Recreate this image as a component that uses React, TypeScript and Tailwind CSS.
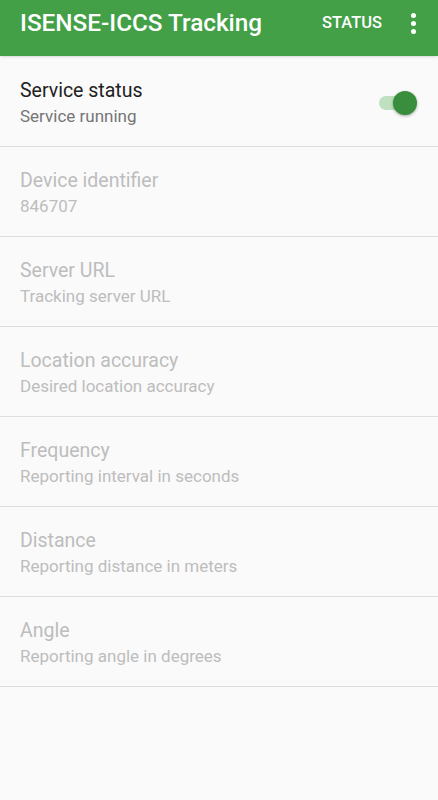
import React from 'react';

const rows = [
  { title: 'Device identifier', summary: '846707' },
  { title: 'Server URL', summary: 'Tracking server URL' },
  { title: 'Location accuracy', summary: 'Desired location accuracy' },
  { title: 'Frequency', summary: 'Reporting interval in seconds' },
  { title: 'Distance', summary: 'Reporting distance in meters' },
  { title: 'Angle', summary: 'Reporting angle in degrees' },
];

const App: React.FC = () => {
  return (
    <div className="min-h-[800px] w-[438px] bg-[#fafafa] font-['Roboto',sans-serif]">
      <header className="flex h-14 items-center bg-[#43a047] pb-[10px] pl-5 pr-[22px] text-white shadow-sm">
        <h1 className="flex-1 text-[24.3px] font-medium">ISENSE-ICCS Tracking</h1>
        <span className="mr-[29px] text-[16.5px] font-medium">STATUS</span>
        <div className="flex flex-col gap-[3px]">
          <span className="h-[5px] w-[5px] rounded-full bg-white" />
          <span className="h-[5px] w-[5px] rounded-full bg-white" />
          <span className="h-[5px] w-[5px] rounded-full bg-white" />
        </div>
      </header>

      <div className="mt-px flex h-[90px] items-center border-b border-[#dedede] pl-5 pr-[21px] pt-[2px]">
        <div className="flex-1">
          <div className="text-[19.5px] leading-[26px] text-[#212121]">Service status</div>
          <div className="text-[17px] leading-[24px] text-[#757575]">Service running</div>
        </div>
        <div className="relative h-6 w-[38px]">
          <div className="absolute left-0 top-[5px] h-[14px] w-[34px] rounded-full bg-[#a5d6a7] opacity-70" />
          <div className="absolute right-0 top-0 h-6 w-6 rounded-full bg-[#388e3c] shadow-[0_1px_3px_rgba(0,0,0,0.35)]" />
        </div>
      </div>

      {rows.map((row) => (
        <div key={row.title} className="flex h-[90px] flex-col justify-center border-b border-[#dedede] pl-5 pt-[2px]">
          <div className="text-[19.5px] leading-[26px] text-[#bdbdbd]">{row.title}</div>
          <div className="text-[17px] leading-[24px] text-[#bdbdbd]">{row.summary}</div>
        </div>
      ))}
    </div>
  );
};

export default App;
